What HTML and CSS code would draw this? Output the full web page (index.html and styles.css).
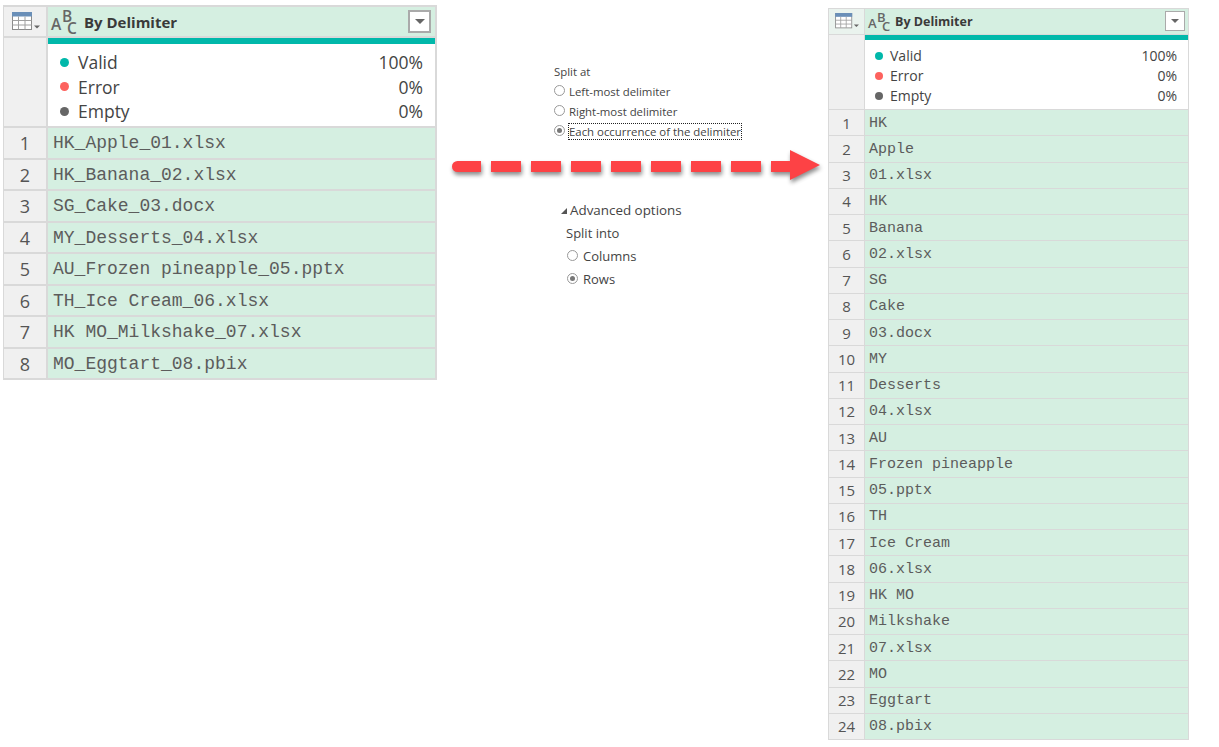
FILE: index.html
```html
<!DOCTYPE html>
<html lang="en">
<head>
<meta charset="utf-8">
<title>Split by delimiter</title>
<link rel="stylesheet" href="styles.css">
</head>
<body>
<svg class="defs" width="0" height="0" aria-hidden="true">
  <symbol id="table-icon" viewBox="0 0 29 20">
    <rect x="0.5" y="0.5" width="19" height="17" fill="#fff" stroke="#8a8a8a"/>
    <rect x="0" y="0" width="20" height="4.5" fill="#6a8fb8"/>
    <path d="M0.5 8.5H19.500M0.5 13H19.500M6.500 4.500V17.500M13 4.500V17.500" stroke="#a0a0a0" fill="none"/>
    <path d="M22 13.500H28L25 16.500Z" fill="#666"/>
  </symbol>
</svg>
<main class="page">
  <section class="table table-large">
    <div class="corner"><svg class="table-icon"><use href="#table-icon"/></svg></div>
    <div class="head">
      <span class="abc"><span class="abc-a">A</span><span class="abc-b">B</span><span class="abc-c">C</span></span>
      <span class="title">By Delimiter</span>
      <span class="drop"><i></i></span>
    </div>
    <div class="blank"></div>
    <div class="stats">
      <div class="stat"><i class="dot teal"></i><span>Valid</span><b>100%</b></div>
      <div class="stat"><i class="dot red"></i><span>Error</span><b>0%</b></div>
      <div class="stat"><i class="dot grey"></i><span>Empty</span><b>0%</b></div>
    </div>
    <div class="num">1</div><div class="cell">HK_Apple_01.xlsx</div>
    <div class="num">2</div><div class="cell">HK_Banana_02.xlsx</div>
    <div class="num">3</div><div class="cell">SG_Cake_03.docx</div>
    <div class="num">4</div><div class="cell">MY_Desserts_04.xlsx</div>
    <div class="num">5</div><div class="cell">AU_Frozen pineapple_05.pptx</div>
    <div class="num">6</div><div class="cell">TH_Ice Cream_06.xlsx</div>
    <div class="num">7</div><div class="cell">HK MO_Milkshake_07.xlsx</div>
    <div class="num">8</div><div class="cell">MO_Eggtart_08.pbix</div>
  </section>

  <section class="options">
    <div class="split-at">
      <div class="label">Split at</div>
      <div class="radio-row"><i class="radio"></i><span>Left-most delimiter</span></div>
      <div class="radio-row"><i class="radio"></i><span>Right-most delimiter</span></div>
      <div class="radio-row"><i class="radio on"></i><span class="focus">Each occurrence of the delimiter</span></div>
    </div>
    <div class="advanced">
      <div class="adv-title"><i class="tri"></i>Advanced options</div>
      <div class="label">Split into</div>
      <div class="radio-row"><i class="radio"></i><span>Columns</span></div>
      <div class="radio-row"><i class="radio on"></i><span>Rows</span></div>
    </div>
    <svg class="arrow" width="380" height="44" viewBox="0 0 380 44">
      <g fill="#fd4245">
        <path d="M12.500 11H36V22H12.500A5.500 5.500 0 0 1 12.500 11Z"/>
        <rect x="46" y="11" width="30" height="11"/>
        <rect x="86" y="11" width="30" height="11"/>
        <rect x="126" y="11" width="30" height="11"/>
        <rect x="166" y="11" width="30" height="11"/>
        <rect x="206" y="11" width="30" height="11"/>
        <rect x="246" y="11" width="30" height="11"/>
        <rect x="286" y="11" width="30" height="11"/>
        <path d="M326 11H345V0L375 15L345 30V22H326Z"/>
      </g>
    </svg>
  </section>

  <section class="table table-small">
    <div class="corner"><svg class="table-icon"><use href="#table-icon"/></svg></div>
    <div class="head">
      <span class="abc"><span class="abc-a">A</span><span class="abc-b">B</span><span class="abc-c">C</span></span>
      <span class="title">By Delimiter</span>
      <span class="drop"><i></i></span>
    </div>
    <div class="blank"></div>
    <div class="stats">
      <div class="stat"><i class="dot teal"></i><span>Valid</span><b>100%</b></div>
      <div class="stat"><i class="dot red"></i><span>Error</span><b>0%</b></div>
      <div class="stat"><i class="dot grey"></i><span>Empty</span><b>0%</b></div>
    </div>
    <div class="num">1</div><div class="cell">HK</div>
    <div class="num">2</div><div class="cell">Apple</div>
    <div class="num">3</div><div class="cell">01.xlsx</div>
    <div class="num">4</div><div class="cell">HK</div>
    <div class="num">5</div><div class="cell">Banana</div>
    <div class="num">6</div><div class="cell">02.xlsx</div>
    <div class="num">7</div><div class="cell">SG</div>
    <div class="num">8</div><div class="cell">Cake</div>
    <div class="num">9</div><div class="cell">03.docx</div>
    <div class="num">10</div><div class="cell">MY</div>
    <div class="num">11</div><div class="cell">Desserts</div>
    <div class="num">12</div><div class="cell">04.xlsx</div>
    <div class="num">13</div><div class="cell">AU</div>
    <div class="num">14</div><div class="cell">Frozen pineapple</div>
    <div class="num">15</div><div class="cell">05.pptx</div>
    <div class="num">16</div><div class="cell">TH</div>
    <div class="num">17</div><div class="cell">Ice Cream</div>
    <div class="num">18</div><div class="cell">06.xlsx</div>
    <div class="num">19</div><div class="cell">HK MO</div>
    <div class="num">20</div><div class="cell">Milkshake</div>
    <div class="num">21</div><div class="cell">07.xlsx</div>
    <div class="num">22</div><div class="cell">MO</div>
    <div class="num">23</div><div class="cell">Eggtart</div>
    <div class="num">24</div><div class="cell">08.pbix</div>
  </section>
</main>
</body>
</html>
```

FILE: styles.css
```css
* { box-sizing: border-box; }
html, body { margin: 0; padding: 0; background: #fff; }
body { width: 1219px; height: 747px; overflow: hidden; font-family: "Open Sans", sans-serif; color: #444; }
.defs { position: absolute; }
.page { display: flex; align-items: flex-start; padding-left: 3px; }

.table {
  display: grid;
  background: #d9d9d9;
  flex: none;
}
.corner { display: flex; align-items: center; justify-content: center; }
.blank, .num { background: #f0f0f0; }
.head { background: #d5efe1; display: flex; align-items: center; position: relative; }
.stats { background: #fff; display: flex; flex-direction: column; justify-content: center; }
.stat { display: flex; align-items: center; }
.stat span { flex: 1; }
.stat b { font-weight: 400; }
.dot { border-radius: 50%; flex: none; }
.teal { background: #01b8aa; }
.red { background: #fd625e; }
.grey { background: #666; }
.num { display: flex; align-items: center; justify-content: center; color: #555; }
.cell { background: #d5efe1; display: flex; align-items: center; font-family: "Liberation Mono", monospace; color: #5c5c5c; white-space: pre; padding-top: 1px; }
.title { font-weight: 700; color: #3a3a3a; }
.abc { display: block; position: relative; flex: none; color: #666; line-height: 1; font-weight: 600; }
.abc span { position: absolute; }
.drop { position: absolute; background: #fff; border: 1px solid #aaa; display: flex; align-items: center; justify-content: center; }
.drop i { border-style: solid; border-color: #666 transparent transparent; display: block; }

.table-large {
  width: 434px;
  margin-top: 5px;
  padding: 2px 2px 2px 1px;
  gap: 2px;
  grid-template-columns: 42px 1fr;
  grid-template-rows: 29px 88px repeat(8, 29.500px);
}
.table-large .corner { background: #f0f0f0; }
.table-large .table-icon { width: 29px; height: 20px; margin-left: 3px; }
.table-large .head { padding-left: 3px; gap: 7px; }
.table-large .abc { width: 26px; height: 26px; font-size: 15.500px; }
.table-large .abc-a { left: 0; top: 8px; }
.table-large .abc-b { left: 11px; top: 0; }
.table-large .abc-c { left: 16px; top: 12px; }
.table-large .title { font-size: 15px; }
.table-large .drop { right: 4px; top: 3px; width: 23px; height: 23px; border-width: 2px; }
.table-large .drop i { border-width: 5px 5px 0; }
.table-large .stats { border-top: 6px solid #01b8aa; padding: 3px 12px 0 12px; }
.table-large .stat { height: 24.500px; font-size: 17.500px; }
.table-large .dot { width: 9px; height: 9px; margin-right: 9px; }
.table-large .num { font-size: 18px; padding-top: 1px; }
.table-large .cell { font-size: 18px; padding-left: 5px; }

.options { width: 391px; flex: none; position: relative; height: 300px; font-size: 11.400px; }
.label { color: #444; }
.radio-row { display: flex; align-items: center; }
.radio { display: block; flex: none; border-radius: 50%; border: 1px solid #999; background: #fff; position: relative; }
.radio.on::after { content: ""; position: absolute; inset: 2px; border-radius: 50%; background: #777; }
.split-at { margin: 64px 0 0 117px; }
.split-at .label { height: 15px; line-height: 15px; margin-bottom: 2px; }
.split-at .radio-row { height: 20px; gap: 4px; }
.split-at .radio { width: 11px; height: 11px; margin-top: -2px; }
.focus { outline: 1px dotted #222; outline-offset: 0; }
.advanced { margin: 59px 0 0 124px; font-size: 13px; }
.adv-title { display: flex; align-items: center; height: 20px; margin-bottom: 3px; font-size: 13.400px; }
.tri { width: 0; height: 0; border-style: solid; border-width: 0 0 6px 6px; border-color: transparent transparent #555; margin: 2px 3px 0 0; }
.advanced .label { margin-left: 5px; height: 21px; line-height: 20px; }
.advanced .radio-row { margin-left: 6px; height: 23px; gap: 5px; }
.advanced .radio { width: 11px; height: 11px; margin-top: -1px; }
.arrow { position: absolute; left: 8px; top: 150px; overflow: visible; filter: drop-shadow(1px 3px 2px rgba(0,0,0,.45)); }

.table-small {
  width: 361px;
  margin-top: 8px;
  padding: 1px 1px 1px 1px;
  gap: 1px;
  grid-template-columns: 35px 1fr;
  grid-template-rows: 25px 74px repeat(24, 25.250px);
}
.table-small .corner { background: #eaf3ee; }
.table-small .table-icon { width: 25px; height: 17px; margin-left: 2px; }
.table-small .head { padding-left: 3px; gap: 5px; }
.table-small .abc { width: 22px; height: 22px; font-size: 13px; }
.table-small .abc-a { left: 0; top: 6px; }
.table-small .abc-b { left: 9px; top: 0; }
.table-small .abc-c { left: 14px; top: 9px; }
.table-small .title { font-size: 12.500px; }
.table-small .drop { right: 3px; top: 2px; width: 20px; height: 20px; }
.table-small .drop i { border-width: 4px 4px 0; }
.table-small .stats { border-top: 5px solid #01b8aa; padding: 2px 11px 0 10px; }
.table-small .stat { height: 20px; font-size: 14px; }
.table-small .dot { width: 8px; height: 8px; margin-right: 7px; }
.table-small .num { font-size: 15px; }
.table-small .cell { font-size: 15px; padding-left: 4px; }
```
